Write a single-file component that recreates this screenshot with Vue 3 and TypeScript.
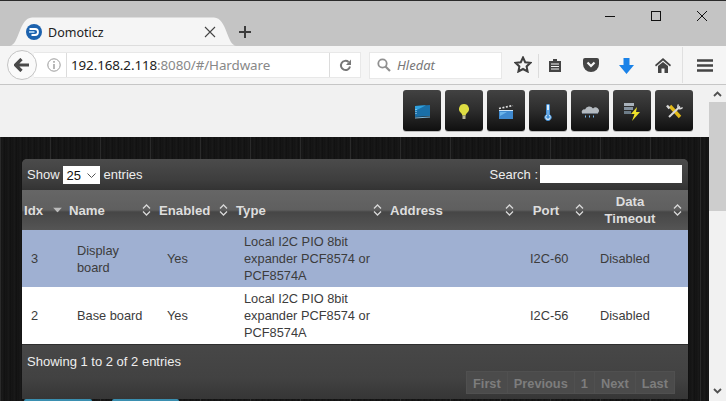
<script setup lang="ts">
interface Row { idx: number; name: string; port: string; cls: string }
const rows: Row[] = [
  { idx: 3, name: 'Display board', port: 'I2C-60', cls: 'sel' },
  { idx: 2, name: 'Base board', port: 'I2C-56', cls: 'plain' },
]
const heads = [
  { t: 'Idx', c: 'left', sort: 'down' },
  { t: 'Name', c: 'left', sort: 'both' },
  { t: 'Enabled', c: 'left', sort: 'both' },
  { t: 'Type', c: 'left', sort: 'both' },
  { t: 'Address', c: 'left', sort: 'both' },
  { t: 'Port', c: 'mid', sort: 'both' },
  { t: 'Data Timeout', c: 'mid', sort: 'both' },
]
const pages = ['First', 'Previous', '1', 'Next', 'Last']
</script>

<template>
  <div class="win">
    <div class="tabstrip">
      <div class="tab">
        <svg class="tabshape" width="226" height="29" viewBox="0 0 226 29"><path d="M0 28.5C9 28.5 9 1 22 .5H204C217 1 217 28.5 226 28.5Z" fill="#f5f5f5"/></svg>
        <svg class="fav" width="16" height="16" viewBox="0 0 16 16">
          <circle cx="8" cy="8" r="8" fill="#1c62ae"/>
          <path d="M3.500 5H9A3 3 0 0 1 9 11H5.500" fill="none" stroke="#fff" stroke-width="1.800"/>
          <path d="M3 8H8.500" stroke="#bfe0fa" stroke-width="1.600"/>
        </svg>
        <span class="tabtitle">Domoticz</span>
        <svg class="tabx" width="12" height="12" viewBox="0 0 12 12"><path d="M1 1L11 11M11 1L1 11" stroke="#444" stroke-width="1.100"/></svg>
      </div>
      <svg class="plus" width="14" height="14" viewBox="0 0 14 14"><path d="M7 1V13M1 7H13" stroke="#3c3c3c" stroke-width="2"/></svg>
      <div class="winctl">
        <svg width="12" height="12" viewBox="0 0 12 12"><path d="M1 6.500H11" stroke="#111"/></svg>
        <svg width="12" height="12" viewBox="0 0 12 12"><rect x="1.500" y="1.500" width="9" height="9" fill="none" stroke="#111"/></svg>
        <svg width="12" height="12" viewBox="0 0 12 12"><path d="M1 1L11 11M11 1L1 11" stroke="#111"/></svg>
      </div>
    </div>

    <div class="toolbar">
      <div class="back">
        <svg width="16" height="14" viewBox="0 0 16 14"><path d="M7.500 1L1.500 7L7.500 13M2 7H15" fill="none" stroke="#4a4a4a" stroke-width="3.200"/></svg>
      </div>
      <div class="urlbar">
        <svg class="info" width="14" height="14" viewBox="0 0 14 14"><circle cx="7" cy="7" r="6.200" fill="none" stroke="#9a9a9a"/><path d="M7 6V11M7 3V4.800" stroke="#9a9a9a" stroke-width="1.400"/></svg>
        <span class="vsep"></span>
        <span class="url"><b>192.168.2.118</b>:8080/#/Hardware</span>
        <span class="vsep end"></span>
        <svg class="reload" width="13" height="13" viewBox="0 0 13 13"><path d="M11 7.500A4.600 4.600 0 1 1 9.600 3" fill="none" stroke="#777" stroke-width="2"/><path d="M12 .5V6H7Z" fill="#777"/></svg>
      </div>
      <div class="searchbar">
        <svg width="14" height="14" viewBox="0 0 14 14"><circle cx="5.500" cy="5.500" r="4.200" fill="none" stroke="#909090" stroke-width="1.800"/><path d="M8.500 8.500L13 13" stroke="#909090" stroke-width="2.200"/></svg>
        <span>Hledat</span>
      </div>
      <div class="tools">
        <svg class="t-star" width="18" height="17" viewBox="0 0 18 17"><path d="M9 1.500L11.200 6.200L16.400 6.800L12.600 10.400L13.600 15.500L9 13L4.400 15.500L5.400 10.400L1.600 6.800L6.800 6.200Z" fill="none" stroke="#3f3f3f" stroke-width="2"/></svg>
        <span class="tsep s1"></span>
        <svg class="t-clip" width="14" height="15" viewBox="0 0 14 15"><path d="M1 3H5V1H9V3H13V14H1Z" fill="#444"/><path d="M3 6H11M3 8.500H11M3 11H11" stroke="#f5f5f5"/></svg>
        <svg class="t-pocket" width="16" height="14" viewBox="0 0 16 14"><path d="M2 0H14A2 2 0 0 1 16 2V6A8 8 0 0 1 0 6V2A2 2 0 0 1 2 0Z" fill="#444"/><path d="M4.500 4.500L8 8L11.500 4.500" fill="none" stroke="#f5f5f5" stroke-width="2.200"/></svg>
        <svg class="t-down" width="15" height="16" viewBox="0 0 15 16"><path d="M4.500 0H10.500V7H15L7.500 16L0 7H4.500Z" fill="#1a82e8"/></svg>
        <svg class="t-home" width="16" height="15" viewBox="0 0 16 15"><path d="M8 0L16 7L15 8.500L8 2.500L1 8.500L0 7Z" fill="#444"/><path d="M3 8L8 4L13 8V15H9.500V10.500H6.500V15H3Z" fill="#444"/></svg>
        <span class="tsep s2"></span>
        <svg class="t-menu" width="16" height="13" viewBox="0 0 16 13"><path d="M0 1.500H16M0 6.500H16M0 11.500H16" stroke="#444" stroke-width="2.600"/></svg>
      </div>
    </div>

    <div class="below">
      <div class="page">
        <div class="topnav">
          <div class="navbtn">
            <svg width="17" height="14" viewBox="0 0 17 14"><path d="M1 1L16 0V11L1 12Z" fill="#1a6fa8"/><path d="M1 1L12 .3L1 6Z" fill="#2f9fdc"/><path d="M2 4V9" stroke="#bfe4f7" stroke-dasharray="1 1"/><path d="M1 13L16 12" stroke="#7fb8dc"/></svg>
          </div>
          <div class="navbtn">
            <svg width="10" height="16" viewBox="0 0 10 16"><path d="M5 0A5 5 0 0 1 8 9C7 10 6.800 10.500 6.800 11.500H3.200C3.200 10.500 3 10 2 9A5 5 0 0 1 5 0Z" fill="#dedd42"/><path d="M3.500 11.500H6.500V15H3.500Z" fill="#b9b79a"/></svg>
          </div>
          <div class="navbtn">
            <svg width="16" height="14" viewBox="0 0 16 14"><path d="M1 3.500L15 .5" stroke="#e0e0e0" stroke-width="1.600" stroke-dasharray="2 1.500"/><rect x="1" y="5" width="14" height="9" fill="#3f8ad0"/><path d="M1 5.500H15" stroke="#cfe6f8"/><path d="M2 7H9L2 11Z" fill="#6ab4ea"/></svg>
          </div>
          <div class="navbtn">
            <svg width="8" height="17" viewBox="0 0 8 17"><path d="M2.500 1.500A1.500 1.500 0 0 1 5.500 1.500V10.500A3.200 3.200 0 1 1 2.500 10.500Z" fill="#dcebf8" stroke="#3f8fd8"/><path d="M4 6V12" stroke="#3f8fd8" stroke-width="1.400"/><circle cx="4" cy="13" r="1.800" fill="#3f8fd8"/></svg>
          </div>
          <div class="navbtn">
            <svg width="18" height="14" viewBox="0 0 18 14"><path d="M1 8A2.500 2.500 0 0 1 4 4.500A4.500 4.500 0 0 1 12 3.500A3 3 0 0 1 17 8Z" fill="#b4bac0"/><path d="M4 11.500H5M8 11.500H9M12 11.500H13" stroke="#7ab8ea" stroke-width="2"/><path d="M1 8.500H17" stroke="#6a7480"/></svg>
          </div>
          <div class="navbtn">
            <svg width="17" height="18" viewBox="0 0 17 18"><rect x="0" y="0" width="10" height="3" fill="#a9b2bb"/><rect x="0" y="4" width="9" height="3" fill="#8593a0"/><rect x="0" y="8" width="7" height="3" fill="#6d7c88"/><path d="M13 4L7 11H10.500L8 18L16 9H12Z" fill="#f0e22a"/></svg>
          </div>
          <div class="navbtn">
            <svg width="17" height="16" viewBox="0 0 17 16"><path d="M4 2L14 13" stroke="#e3ba18" stroke-width="3.400"/><path d="M14 2.500L3 13" stroke="#d8d8d8" stroke-width="2"/><path d="M1 1.500L3.500 4.500" stroke="#d8d8d8" stroke-width="2.400"/><path d="M12.500 .5A3 3 0 0 0 13 4.500A3 3 0 0 0 16.500 3.500" fill="none" stroke="#d8d8d8" stroke-width="1.400"/></svg>
          </div>
        </div>

        <div class="dark">
          <div class="panel">
            <div class="bar-top">
              <div class="show">Show
                <span class="select">25
                  <svg width="9" height="5" viewBox="0 0 9 5"><path d="M.5 .5L4.500 4.500L8.500 .5" fill="none" stroke="#555"/></svg>
                </span>
                entries</div>
              <div class="search">Search :<span class="sinput"></span></div>
            </div>
            <table>
              <colgroup>
                <col class="c1" /><col class="c2" /><col class="c3" /><col class="c4" /><col class="c5" /><col class="c6" /><col class="c7" />
              </colgroup>
              <thead>
                <tr>
                  <th v-for="h in heads" :key="h.t" :class="h.c">
                    {{ h.t }}
                    <svg v-if="h.sort === 'both'" class="sort" width="9" height="12" viewBox="0 0 9 12"><path d="M1 4.500L4.500 1L8 4.500M1 7.500L4.500 11L8 7.500" fill="none" stroke="#d8d8d8" stroke-width="1.300"/></svg>
                    <svg v-else class="sort" width="9" height="5" viewBox="0 0 9 5"><path d="M0 0H9L4.500 5Z" fill="#bbb"/></svg>
                  </th>
                </tr>
              </thead>
              <tbody>
                <tr v-for="r in rows" :key="r.idx" :class="r.cls">
                  <td class="idx">{{ r.idx }}</td>
                  <td>{{ r.name }}</td>
                  <td>Yes</td>
                  <td>Local I2C PIO 8bit expander PCF8574 or PCF8574A</td>
                  <td></td>
                  <td>{{ r.port }}</td>
                  <td>Disabled</td>
                </tr>
              </tbody>
            </table>
            <div class="bar-bottom">
              <div class="info-text">Showing 1 to 2 of 2 entries</div>
              <div class="pager"><span v-for="p in pages" :key="p">{{ p }}</span></div>
            </div>
          </div>
          <div class="actions">
            <span class="act a1"></span>
            <span class="act a2"></span>
          </div>
        </div>
      </div>
      <div class="scrollbar">
        <svg class="up" width="9" height="6" viewBox="0 0 9 6"><path d="M1 5L4.500 1.500L8 5" fill="none" stroke="#505050" stroke-width="1.800"/></svg>
        <div class="thumb"></div>
        <svg class="dn" width="9" height="6" viewBox="0 0 9 6"><path d="M1 1L4.500 4.500L8 1" fill="none" stroke="#505050" stroke-width="1.800"/></svg>
      </div>
    </div>
  </div>
</template>

<style>
html, body { margin: 0; overflow: hidden; }
</style>

<style scoped>
.win { width: 726px; height: 401px; display: flex; flex-direction: column; overflow: hidden; font-family: "Liberation Sans", Arial, sans-serif; }
.tabstrip { height: 45px; flex: none; background: #c4c4c4; border-top: 1px solid #2a2a2a; display: flex; align-items: flex-end; position: relative; box-sizing: content-box; }
.tab { position: relative; margin-left: 10px; width: 226px; height: 28px; display: flex; align-items: center; }
.tabshape { position: absolute; left: 0; top: -1px; }
.fav { position: relative; margin-left: 16px; }
.tabtitle { position: relative; margin-left: 6px; font: 12.500px "Noto Sans", sans-serif; color: #222; flex: 1; }
.tabx { position: relative; margin-right: 20px; }
.plus { margin: 0 0 7px 2px; }
.winctl { position: absolute; top: 9px; right: 18px; display: flex; gap: 34px; }
.toolbar { height: 38px; flex: none; background: #f5f5f5; border-bottom: 1px solid #c6c6c6; display: flex; align-items: center; position: relative; box-sizing: content-box; }
.back { width: 28px; height: 28px; margin-left: 7px; border-radius: 50%; background: #fafafa; border: 1px solid #c4c4c4; display: flex; align-items: center; justify-content: center; position: relative; z-index: 1; flex: none; }
.urlbar { width: 327px; height: 26px; margin-left: -3px; box-sizing: border-box; background: #fff; border: 1px solid #e8e8e8; border-left: 0; display: flex; align-items: center; }
.info { margin-left: 13px; }
.vsep { width: 1px; height: 24px; background: #dcdcdc; margin-left: 5px; flex: none; }
.url { margin-left: 4px; font: 13.400px "Noto Sans", sans-serif; color: #888; white-space: nowrap; width: 258px; letter-spacing: -.1px; }
.url b { font-weight: 400; color: #222; }
.vsep.end { margin-left: 0; }
.reload { margin-left: 9px; }
.searchbar { width: 133px; height: 27px; margin-left: 8px; box-sizing: border-box; background: #fff; border: 1px solid #e8e8e8; display: flex; align-items: center; padding-left: 7px; gap: 6px; font: italic 13px "Noto Sans", sans-serif; color: #777; }
.tools { flex: 1; height: 38px; position: relative; }
.tools svg, .tsep { position: absolute; }
.t-star { left: 12px; top: 10px; }
.s1 { left: 36px; top: 8px; width: 1px; height: 24px; background: #dcdcdc; }
.t-clip { left: 46px; top: 12px; }
.t-pocket { left: 81px; top: 12px; }
.t-down { left: 117px; top: 12px; }
.t-home { left: 153px; top: 12px; }
.s2 { left: 180px; top: 1px; width: 1px; height: 36px; background: #e0e0e0; }
.t-menu { left: 195px; top: 13px; }
.below { flex: 1; min-height: 0; display: flex; }
.page { width: 709px; flex: none; display: flex; flex-direction: column; }
.topnav { height: 52px; flex: none; background: #f1f1f1; display: flex; justify-content: flex-end; gap: 4px; padding: 5px 16px 0 0; box-sizing: border-box; }
.navbtn { width: 38px; height: 41px; padding-top: 3px; box-sizing: border-box; border-radius: 3px; background: linear-gradient(#424242, #2c2c2c 50%, #0f0f0f); display: flex; align-items: center; justify-content: center; box-shadow: 0 1px 0 #bbb; }
.dark { flex: 1; min-height: 0; background: repeating-linear-gradient(90deg, #2a2a2a 0, #2a2a2a 1px, transparent 1px, transparent 50px), repeating-linear-gradient(90deg, #131313 0, #1a1a1a 3px, #101010 4px, #171717 6px); padding: 22px 21px 0 22px; box-sizing: border-box; }
.panel { width: 666px; height: 240px; border-radius: 5px 5px 0 0; background: #444; overflow: hidden; color: #eee; font-size: 13px; }
.bar-top { height: 31px; background: linear-gradient(#4b4b4b, #3d3d3d 70%, #333); display: flex; justify-content: space-between; align-items: center; padding: 0 6px 0 5px; box-sizing: border-box; }
.show { display: flex; align-items: center; gap: 3px; margin-top: -1px; }
.select { width: 37px; height: 18px; background: #fff; color: #111; margin: 1px 1px 0 0; display: flex; align-items: center; justify-content: space-between; padding: 1px 4px 0 4px; box-sizing: border-box; font-size: 13px; }
.search { display: flex; align-items: center; gap: 2px; white-space: pre; margin-top: -1px; }
.sinput { width: 142px; height: 18px; background: #fff; display: block; }
table { width: 666px; table-layout: fixed; border-collapse: collapse; font-size: 12.800px; }
.c1 { width: 45px; }
.c2 { width: 90px; }
.c3 { width: 77px; }
.c4 { width: 154px; }
.c5 { width: 132px; }
.c6 { width: 70px; }
.c7 { width: 98px; }
thead tr { height: 40px; background: linear-gradient(#666 0, #5f5f5f 50%, #464646 55%, #555 100%); }
th { position: relative; padding: 0 20px 0 2px; color: #ddd; font-weight: 700; font-size: 13.200px; line-height: 17px; }
th.left { text-align: left; }
th.mid { text-align: center; }
.sort { position: absolute; right: 6px; top: 50%; transform: translateY(-50%); }
th:first-child .sort { right: 5px; }
tbody tr { height: 57px; color: #3c3c3c; }
td { padding: 0 10px; line-height: 17px; vertical-align: middle; }
td.idx { padding-left: 9px; }
tr.sel { background: #9fb0d2; }
tr.plain { background: #fff; }
.bar-bottom { height: 55px; background: linear-gradient(#474747, #424242 60%, #363636); border-top: 1px solid #2e2e2e; position: relative; padding: 9px 5px; box-sizing: border-box; }
.info-text { line-height: 16px; }
.pager { position: absolute; right: 13px; top: 26px; height: 23px; display: flex; background: #4b4b4b; font-weight: 700; font-size: 12.800px; color: #7d7d7d; }
.pager span { padding: 0 6px; line-height: 23px; border: 1px solid #505050; margin-left: -1px; }
.actions { display: flex; gap: 20px; padding-left: 2px; }
.act { display: block; height: 2px; background: #3a8fb0; border-radius: 2px 2px 0 0; }
.a1 { width: 68px; }
.a2 { width: 67px; }
.scrollbar { flex: 1; background: #f1f1f1; position: relative; }
.thumb { position: absolute; left: 0; right: 0; top: 17px; height: 109px; background: #cdcdcd; }
.up { position: absolute; left: 4px; top: 6px; }
.dn { position: absolute; left: 4px; bottom: 7px; }
</style>
